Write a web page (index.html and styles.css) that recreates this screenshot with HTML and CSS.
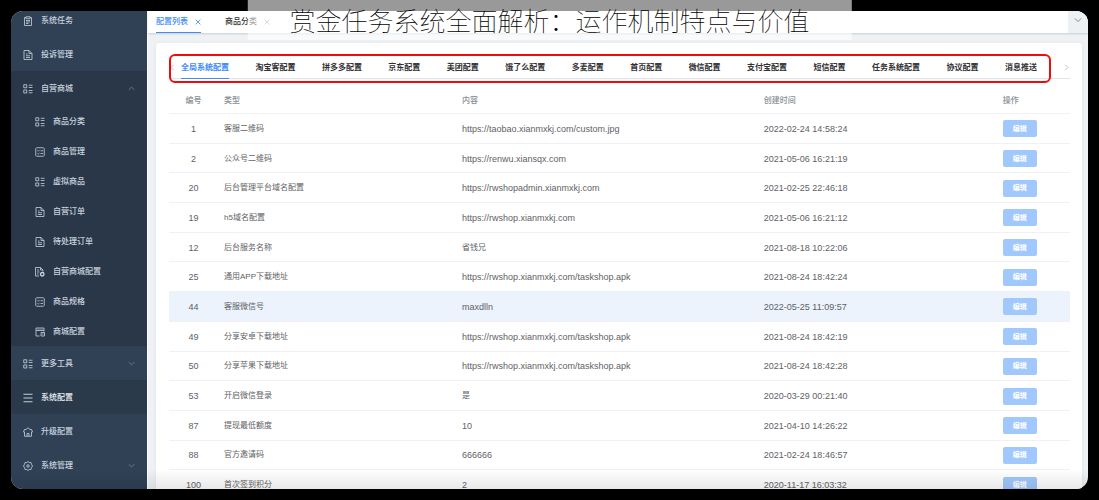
FILE: index.html
```html
<!DOCTYPE html>
<html lang="zh-CN">
<head>
<meta charset="utf-8">
<title>系统配置</title>
<link rel="stylesheet" href="styles.css">
</head>
<body>
<svg class="sprite" aria-hidden="true">
  <symbol id="clipboard" viewBox="0 0 20 20"><path d="M6 3H3v16h14V3h-3M6 1.500h8v4H6zM6 9h8M6 12h8M6 15h5"/></symbol>
  <symbol id="doc" viewBox="0 0 20 20"><path d="M2 1h10l6 6v12H2zM12 1v6h6M6 8h3M6 11.500h8M6 15h8"/></symbol>
  <symbol id="grid" viewBox="0 0 20 20"><path d="M1.500 1.500h6v6h-6zM1.500 12h6v6h-6zM11.500 2.500H19M11.500 7H19M11.500 13H19M11.500 17.500H19"/></symbol>
  <symbol id="list" viewBox="0 0 20 20"><path d="M3 1.500h14l1.500 1.500v14L17 18.500H3L1.500 17V3zM5 7l1.500 1.500L9 6M11 7.500h5M5 13l1.500 1L9 12M11 13h5"/></symbol>
  <symbol id="docgear" viewBox="0 0 20 20"><path d="M8 18H1V1h10l5 5v3M11 1v5h5M4 6h4M4 10h5M4 14h3"/><circle cx="14.500" cy="14.500" r="3.500" stroke-width="2.600"/></symbol>
  <symbol id="store" viewBox="0 0 20 20"><path d="M9 18H2V2h16v7M2 7h16M5 4.500h2M9 4.500h2M13 4.500h2M12 11h7v7h-7zM14 14h3"/></symbol>
  <symbol id="bars" viewBox="0 0 20 20"><path d="M1 2.500h18M1 10h18M1 17.500h18"/></symbol>
  <symbol id="home" viewBox="0 0 20 20"><path d="M1 10l2-5h3l4-3.500L14 5h3l2 5h-2v8.500H3V10zM8 18.500V13h4v5.500"/></symbol>
  <symbol id="gear" viewBox="0 0 20 20"><path d="M10 1l2.500 2H16l1 3.500L19 10l-2 3.500L16 17h-3.500L10 19l-2.500-2H4l-1-3.500L1 10l2-3.500L4 3h3.500z"/><circle cx="10" cy="10" r="2.500"/></symbol>
  <symbol id="down" viewBox="0 0 10 10"><path d="M1 3l4 4 4-4"/></symbol>
  <symbol id="up" viewBox="0 0 10 10"><path d="M1 7l4-4 4 4"/></symbol>
  <symbol id="left" viewBox="0 0 10 10"><path d="M7 1L3 5l4 4"/></symbol>
  <symbol id="right" viewBox="0 0 10 10"><path d="M3 1l4 4-4 4"/></symbol>
  <symbol id="close" viewBox="0 0 10 10"><path d="M1 1l8 8M9 1L1 9"/></symbol>
</svg>

<div class="app">
  <nav class="sidebar">
    <ul class="menu">
      <li><a class="item" href="#"><svg class="icon"><use href="#clipboard"/></svg>系统任务</a></li>
      <li><a class="item" href="#"><svg class="icon"><use href="#doc"/></svg>投诉管理</a></li>
      <li class="open">
        <a class="item" href="#"><svg class="icon"><use href="#grid"/></svg>自营商城<svg class="arrow"><use href="#up"/></svg></a>
        <ul class="submenu">
          <li><a class="item" href="#"><svg class="icon"><use href="#grid"/></svg>商品分类</a></li>
          <li><a class="item" href="#"><svg class="icon"><use href="#list"/></svg>商品管理</a></li>
          <li><a class="item" href="#"><svg class="icon"><use href="#grid"/></svg>虚拟商品</a></li>
          <li><a class="item" href="#"><svg class="icon"><use href="#doc"/></svg>自营订单</a></li>
          <li><a class="item" href="#"><svg class="icon"><use href="#doc"/></svg>待处理订单</a></li>
          <li><a class="item" href="#"><svg class="icon"><use href="#docgear"/></svg>自营商城配置</a></li>
          <li><a class="item" href="#"><svg class="icon"><use href="#list"/></svg>商品规格</a></li>
          <li><a class="item" href="#"><svg class="icon"><use href="#store"/></svg>商城配置</a></li>
        </ul>
      </li>
      <li><a class="item" href="#"><svg class="icon"><use href="#grid"/></svg>更多工具<svg class="arrow"><use href="#down"/></svg></a></li>
      <li><a class="item current" href="#"><svg class="icon"><use href="#bars"/></svg>系统配置</a></li>
      <li><a class="item" href="#"><svg class="icon"><use href="#home"/></svg>升级配置</a></li>
      <li><a class="item" href="#"><svg class="icon"><use href="#gear"/></svg>系统管理<svg class="arrow"><use href="#down"/></svg></a></li>
    </ul>
  </nav>

  <main class="main">
    <header class="pages">
      <button class="page active" type="button">配置列表<svg class="close"><use href="#close"/></svg></button>
      <button class="page" type="button">商品分类<svg class="close"><use href="#close"/></svg></button>
      <button class="more" type="button" aria-label="更多"><svg class="chevron"><use href="#down"/></svg></button>
    </header>

    <section class="card">
      <div class="tabs">
        <button class="scroll" type="button" aria-label="向左"><svg class="chevron"><use href="#left"/></svg></button>
        <div class="tablist">
          <button class="tab active" type="button">全局系统配置</button>
          <button class="tab" type="button">淘宝客配置</button>
          <button class="tab" type="button">拼多多配置</button>
          <button class="tab" type="button">京东配置</button>
          <button class="tab" type="button">美团配置</button>
          <button class="tab" type="button">饿了么配置</button>
          <button class="tab" type="button">多麦配置</button>
          <button class="tab" type="button">首页配置</button>
          <button class="tab" type="button">微信配置</button>
          <button class="tab" type="button">支付宝配置</button>
          <button class="tab" type="button">短信配置</button>
          <button class="tab" type="button">任务系统配置</button>
          <button class="tab" type="button">协议配置</button>
          <button class="tab" type="button">消息推送</button>
        </div>
        <button class="scroll next" type="button" aria-label="向右"><svg class="chevron"><use href="#right"/></svg></button>
        <div class="marker"></div>
      </div>

      <table class="table">
        <colgroup><col class="c-id"><col class="c-type"><col class="c-content"><col class="c-time"><col></colgroup>
        <thead><tr><th>编号</th><th>类型</th><th>内容</th><th>创建时间</th><th>操作</th></tr></thead>
        <tbody>
          <tr><td>1</td><td>客服二维码</td><td class="latin">https://taobao.xianmxkj.com/custom.jpg</td><td>2022-02-24 14:58:24</td><td><button class="edit" type="button">编辑</button></td></tr>
          <tr><td>2</td><td>公众号二维码</td><td class="latin">https://renwu.xiansqx.com</td><td>2021-05-06 16:21:19</td><td><button class="edit" type="button">编辑</button></td></tr>
          <tr><td>20</td><td>后台管理平台域名配置</td><td class="latin">https://rwshopadmin.xianmxkj.com</td><td>2021-02-25 22:46:18</td><td><button class="edit" type="button">编辑</button></td></tr>
          <tr><td>19</td><td>h5域名配置</td><td class="latin">https://rwshop.xianmxkj.com</td><td>2021-05-06 16:21:12</td><td><button class="edit" type="button">编辑</button></td></tr>
          <tr><td>12</td><td>后台服务名称</td><td>省钱兄</td><td>2021-08-18 10:22:06</td><td><button class="edit" type="button">编辑</button></td></tr>
          <tr><td>25</td><td>通用APP下载地址</td><td class="latin">https://rwshop.xianmxkj.com/taskshop.apk</td><td>2021-08-24 18:42:24</td><td><button class="edit" type="button">编辑</button></td></tr>
          <tr class="hover"><td>44</td><td>客服微信号</td><td class="latin">maxdlln</td><td>2022-05-25 11:09:57</td><td><button class="edit" type="button">编辑</button></td></tr>
          <tr><td>49</td><td>分享安卓下载地址</td><td class="latin">https://rwshop.xianmxkj.com/taskshop.apk</td><td>2021-08-24 18:42:19</td><td><button class="edit" type="button">编辑</button></td></tr>
          <tr><td>50</td><td>分享苹果下载地址</td><td class="latin">https://rwshop.xianmxkj.com/taskshop.apk</td><td>2021-08-24 18:42:28</td><td><button class="edit" type="button">编辑</button></td></tr>
          <tr><td>53</td><td>开启微信登录</td><td>是</td><td>2020-03-29 00:21:40</td><td><button class="edit" type="button">编辑</button></td></tr>
          <tr><td>87</td><td>提现最低额度</td><td class="latin">10</td><td>2021-04-10 14:26:22</td><td><button class="edit" type="button">编辑</button></td></tr>
          <tr><td>88</td><td>官方邀请码</td><td class="latin">666666</td><td>2021-02-24 18:46:57</td><td><button class="edit" type="button">编辑</button></td></tr>
          <tr><td>100</td><td>首次签到积分</td><td class="latin">2</td><td>2020-11-17 16:03:32</td><td><button class="edit" type="button">编辑</button></td></tr>
        </tbody>
      </table>
    </section>
  </main>
</div>

<h1 class="banner">赏金任务系统全面解析：运作机制特点与价值</h1>
</body>
</html>
```
FILE: styles.css
```css
* { box-sizing: border-box; }

body {
  margin: 0;
  padding: 11px;
  height: 100vh;
  overflow: hidden;
  background: #000;
  font-family: "Liberation Sans", "Noto Sans CJK SC", sans-serif;
  font-size: 8px;
  line-height: 12px;
  color: #606266;
}

button {
  margin: 0;
  padding: 0;
  border: 0;
  background: none;
  font: inherit;
  color: inherit;
  white-space: nowrap;
}

ul { list-style: none; margin: 0; padding: 0; }

svg { flex: none; fill: none; stroke: currentColor; }

.sprite { position: absolute; width: 0; height: 0; }

.app {
  position: relative;
  display: flex;
  height: 100%;
  overflow: hidden;
  border-radius: 12px;
  background: #eef2f5;
}

.app::after {
  content: "";
  position: absolute;
  inset: auto 0 0 0;
  height: 20px;
  background: linear-gradient(transparent, rgba(0, 0, 0, 0.09));
  pointer-events: none;
}

/* Sidebar */
.sidebar {
  flex: 0 0 137px;
  background: #304156;
  border-right: 1px solid #fff;
  overflow: hidden;
}

.menu { margin-top: -8px; }

.item {
  display: flex;
  align-items: center;
  gap: 8px;
  height: 34px;
  padding: 1px 12px 0;
  color: #c9d3df;
  font-weight: 500;
  text-decoration: none;
}

.open { background: #293749; }
.current { background: #2b3a4b; color: #f0f4f8; }

.submenu { padding-top: 1px; }
.submenu .item { height: 30px; padding-left: 24px; }

.icon { width: 10px; height: 10px; stroke-width: 1.6; }
.arrow { width: 7px; height: 7px; margin-left: auto; color: #8592a3; }

/* Page tabs */
.main { flex: 1; min-width: 0; }

.pages {
  display: flex;
  height: 22px;
  background: #fff;
  box-shadow: 0 1px 2px rgba(0, 0, 0, 0.15);
}

.page {
  display: flex;
  align-items: center;
  gap: 7px;
  margin-left: 8px;
  margin-right: 16px;
  color: #303133;
  font-weight: 500;
}

.page.active {
  color: #3d8bf5;
  border-bottom: 1px solid #3d8bf5;
  padding-top: 1px;
}

.close { width: 6px; height: 6px; stroke-width: 1.4; color: #8d9299; }
.active .close { color: #3d8bf5; }

.more {
  width: 20px;
  margin-left: auto;
  background: #eef1f4;
  color: #6b7078;
}

.chevron { width: 8px; height: 8px; }

/* Content */
.card {
  margin: 10px 6px 0 8px;
  padding: 11px 12px 0 13px;
  border-radius: 3px;
  background: #fff;
  box-shadow: 0 0 4px rgba(0, 0, 0, 0.06);
}

.tabs {
  position: relative;
  display: flex;
  align-items: stretch;
  height: 25px;
  border-bottom: 1px solid #dfe4ed;
}

.scroll { width: 7px; padding-top: 5px; color: #a4a9b2; }
.scroll .chevron { width: 7px; height: 7px; }
.next { margin-left: 26px; }

.tablist {
  flex: 1;
  display: flex;
  justify-content: space-between;
  margin-left: 5px;
}

.tab {
  margin-bottom: -1px;
  padding-top: 3px;
  border-bottom: 1px solid transparent;
  color: #303133;
  font-weight: 700;
}

.tab.active { color: #3d8bf5; border-color: #3d8bf5; }

.marker {
  position: absolute;
  inset: 0 19px -5px 0;
  border: 2px solid #f00a0a;
  border-radius: 6px;
  pointer-events: none;
}

.table {
  width: 100%;
  height: 413px;
  margin-top: 8px;
  border-collapse: separate;
  border-spacing: 0;
  table-layout: fixed;
}

.c-id { width: 49px; }
.c-type { width: 238px; }
.c-content { width: 33.5%; }
.c-time { width: 239px; }

.table th, .table td {
  padding: 0 6px;
  border-bottom: 1px solid #eff1f7;
  text-align: left;
  vertical-align: middle;
  white-space: nowrap;
}

.table th { height: 27px; padding-top: 2px; color: #8a8d94; font-weight: 500; }
.table td { padding-top: 1px; }
.table th:first-child, .table td:first-child { text-align: center; }
.table td:first-child, .table td:nth-child(4), .latin { font-size: 9px; }
.hover td { background: #ecf3fd; }

.edit {
  display: block;
  width: 34px;
  height: 17px;
  border-radius: 2px;
  background: #a0c8fd;
  color: #fff;
  font-size: 7px;
  font-weight: 700;
}

/* Title banner */
.banner {
  position: absolute;
  top: 0;
  left: 50%;
  width: 55%;
  height: 40px;
  margin: 0;
  transform: translateX(-50%);
  background: rgba(255, 255, 255, 0.6);
  color: #000;
  font-family: "Noto Sans CJK SC", sans-serif;
  font-size: 26px;
  font-weight: 100;
  line-height: 40px;
  text-align: center;
  white-space: nowrap;
}
```
